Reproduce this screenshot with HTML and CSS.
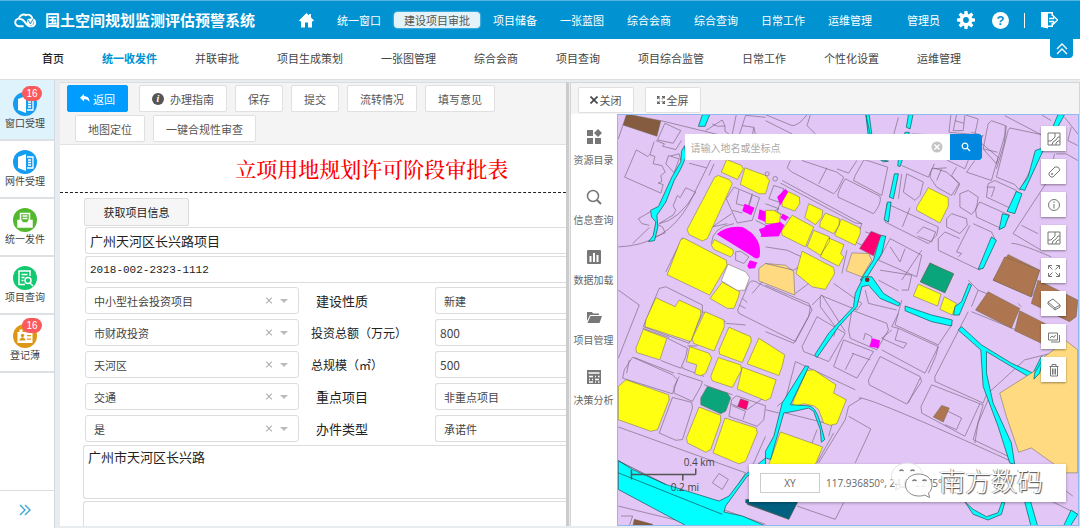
FILE: index.html
```html
<!DOCTYPE html>
<html lang="zh-CN">
<head>
<meta charset="utf-8">
<title>国土空间规划监测评估预警系统</title>
<link rel="stylesheet" href="styles.css">
</head>
<body>
<header class="topbar">
  <svg class="logo" viewBox="0 0 24 17" fill="none" stroke="#fff" stroke-width="2"><path d="M10 14.500H5.500a4 4 0 0 1-.5-8C6 3 9 1.500 12 2.500M5 7c3-1 5 1 7 4s4 4 7 3.500c4-1 4-6 .5-7C19 3 15 1 11.500 3.500"/><circle cx="17" cy="10" r="3.500" fill="#fff" stroke="none"/><path d="m15 8 2 4 3-5" stroke="#0092d1" stroke-width="1"/></svg>
  <h1 class="brand">国土空间规划监测评估预警系统</h1>
  <nav class="mainnav">
    <a href="#" class="home" aria-label="首页"><svg viewBox="0 0 15 15" fill="#fff"><path d="M7.500 0 0 7.500 1.300 8.500 2 8v6.500h4V9.500h3v5h4V8l.7.500L15 7.500 12 4.500V1h-2v1.500z"/></svg></a>
    <a href="#">统一窗口</a>
    <a href="#" class="active">建设项目审批</a>
    <a href="#">项目储备</a>
    <a href="#">一张蓝图</a>
    <a href="#">综合会商</a>
    <a href="#">综合查询</a>
    <a href="#">日常工作</a>
    <a href="#">运维管理</a>
  </nav>
  <div class="account">
    <span>管理员</span>
    <button aria-label="设置"><svg viewBox="0 0 18 18"><g fill="#fff"><circle cx="9" cy="9" r="6.200"/><path d="M7.500 0h3l.5 4H7zM7.500 18h3l.5-4H7zM0 7.500v3l4 .5V7zM18 7.500v3l-4 .5V7zM1.600 3.700l2.100-2.100 3.200 2.500-2.800 2.800zM14.300 1.600l2.100 2.100-2.500 3.200-2.800-2.800zM16.400 14.300l-2.100 2.100-3.200-2.500 2.800-2.800zM3.700 16.400l-2.100-2.100 2.500-3.200 2.800 2.800z"/></g><circle cx="9" cy="9" r="2.900" fill="#0092d1"/></svg></button>
    <button aria-label="帮助" class="help">?</button>
    <i class="bar"></i>
    <button aria-label="退出"><svg viewBox="0 0 18 18"><path d="M1 1h12v4h-1.500V2.500H8v12h3.500V12H13v4H8v1.500L1 16z" fill="#fff"/><path d="M9 7.500h4.500V5l4 4-4 4v-2.500H9" fill="none" stroke="#fff" stroke-width="1.300"/></svg></button>
  </div>
</header>
<nav class="subnav">
  <a href="#" class="first">首页</a><a href="#" class="on">统一收发件</a><a href="#">并联审批</a><a href="#">项目生成策划</a><a href="#">一张图管理</a><a href="#">综合会商</a><a href="#">项目查询</a><a href="#">项目综合监管</a><a href="#">日常工作</a><a href="#">个性化设置</a><a href="#">运维管理</a>
  <button class="collapse" aria-label="收起"><svg viewBox="0 0 12 12" fill="none" stroke="#fff" stroke-width="1.300"><path d="m1 6 5-5 5 5M1 11l5-5 5 5"/></svg></button>
</nav>
<div class="work">
  <aside class="side">
    <a href="#" class="item sel"><span class="ico blue"><svg viewBox="0 0 24 24"><path d="M5 7l8-3v17l-8-3z" fill="#fff"/><path d="M14 7h6v11h-6M15 10h3M15 12.500h3M15 15h3" fill="none" stroke="#fff" stroke-width="1.300"/></svg><b class="badge">16</b></span>窗口受理</a>
    <a href="#" class="item"><span class="ico blue"><svg viewBox="0 0 24 24"><path d="M5 7l8-3v17l-8-3z" fill="#fff"/><path d="M14 7h6v11h-6M15 10h3M15 12.500h3M15 15h3" fill="none" stroke="#fff" stroke-width="1.300"/></svg></span>网件受理</a>
    <a href="#" class="item"><span class="ico green"><svg viewBox="0 0 24 24" fill="none" stroke="#fff" stroke-width="1.500"><path d="M7.500 12V5.500h9V12M9.500 8h5M9.500 10.500h5"/><path d="M5 12.500h3l1.500 2.500h5l1.500-2.500h3V19H5z" fill="#fff"/></svg></span>统一发件</a>
    <a href="#" class="item"><span class="ico mint"><svg viewBox="0 0 24 24" fill="none" stroke="#fff" stroke-width="1.500"><path d="M17 10V5H6v13.500h6M8.500 8.500h6M8.500 11.500h3M8.500 14.500h2"/><circle cx="15" cy="14.500" r="3"/><path d="m17 17 3 3"/></svg></span>项目查询</a>
    <a href="#" class="item"><span class="ico gold"><svg viewBox="0 0 24 24"><path d="M4.500 8h2V5.500h3V8h5V5.500h3V8h2v11h-15z" fill="#fff"/><g fill="#dc9814"><circle cx="9.500" cy="11.500" r="1.700"/><path d="M6.500 16.500h6v-1l-2-2h-2l-2 2zM14 11h4v1.300h-4zM14 14.500h4v1.300h-4z"/></g></svg><b class="badge">16</b></span>登记薄</a>
    <button class="expand" aria-label="展开"><svg viewBox="0 0 12 12" fill="none" stroke="#36a3d9" stroke-width="1.300"><path d="m1 1 5 5-5 5M6 1l5 5-5 5"/></svg></button>
  </aside>

  <main class="formpane">
    <div class="tools">
      <div class="toolrow">
        <button class="btn primary"><svg viewBox="0 0 10 9" fill="#fff"><path d="M4 0v2.200c4 0 5.500 2 5.500 6C8.500 6 7 5 4 5.200V7.500L0 3.700z"/></svg>返回</button>
        <button class="btn guide"><i class="info">i</i>办理指南</button>
        <button class="btn">保存</button>
        <button class="btn">提交</button>
        <button class="btn">流转情况</button>
        <button class="btn">填写意见</button>
      </div>
      <div class="toolrow second">
        <button class="btn">地图定位</button>
        <button class="btn">一键合规性审查</button>
      </div>
    </div>
    <form class="form">
      <h2>立项用地规划许可阶段审批表</h2>
      <div class="fields">
        <button type="button" class="fetch">获取项目信息</button>
        <input class="box wide" aria-label="项目名称" value="广州天河区长兴路项目">
        <input class="box wide code" aria-label="项目编号" value="2018-002-2323-1112">
        <div class="grid">
          <div class="pick box"><select aria-label="项目类型"><option>中小型社会投资项目</option></select><button type="button" aria-label="清除"></button><i></i></div>
          <label for="f1">建设性质</label>
          <select id="f1" class="box half"><option>新建</option></select>
          <div class="pick box"><select aria-label="资金来源"><option>市财政投资</option></select><button type="button" aria-label="清除"></button><i></i></div>
          <label for="f2" class="wider">投资总额（万元）</label>
          <input id="f2" class="box num" value="800">
          <div class="pick box"><select aria-label="所在区"><option>天河区</option></select><button type="button" aria-label="清除"></button><i></i></div>
          <label for="f3" class="wider">总规模（㎡）</label>
          <input id="f3" class="box num" value="500">
          <div class="pick box"><select aria-label="行业"><option>交通</option></select><button type="button" aria-label="清除"></button><i></i></div>
          <label for="f4">重点项目</label>
          <select id="f4" class="box half"><option>非重点项目</option></select>
          <div class="pick box"><select aria-label="是否"><option>是</option></select><button type="button" aria-label="清除"></button><i></i></div>
          <label for="f5">办件类型</label>
          <select id="f5" class="box half"><option>承诺件</option></select>
        </div>
        <textarea class="box area" aria-label="地址">广州市天河区长兴路</textarea>
        <textarea class="box area" aria-label="备注"></textarea>
      </div>
    </form>
  </main>

  <section class="mappane">
    <div class="maptools">
      <button class="btn"><svg viewBox="0 0 8 8" stroke="#444" stroke-width="1.600"><path d="m.5.500 7 7m0-7-7 7"/></svg>关闭</button>
      <button class="btn"><svg viewBox="0 0 8 8" fill="none" stroke="#555" stroke-width="1.300"><path d="M.6 3V.6H3M5 .6h2.400V3M7.400 5v2.400H5M3 7.400H.6V5M1 1l2 2M7 1 5 3M7 7 5 5M1 7l2-2" stroke-dasharray="1.500 .6"/></svg>全屏</button>
    </div>
    <div class="mapbody">
      <nav class="layers">
        <a href="#"><svg viewBox="0 0 16 16" fill="#777"><path d="M1 1h6v6H1zM1 9h6v6H1zM9 9h6v6H9zM12 0l4 4-4 4-4-4z"/></svg>资源目录</a>
        <a href="#"><svg viewBox="0 0 16 16" fill="none" stroke="#777" stroke-width="1.500"><circle cx="7" cy="7" r="5.500"/><path d="m11 11 4 4" stroke-width="2"/></svg>信息查询</a>
        <a href="#"><svg viewBox="0 0 16 16"><rect x="1" y="1" width="14" height="14" rx="1" fill="#777"/><path d="M4.500 13V7M8 13V4M11.500 13V6" stroke="#fff" stroke-width="2"/></svg>数据加载</a>
        <a href="#"><svg viewBox="0 0 16 16" fill="#777"><path d="M1 12V3h5l1 1.500h6V6H4zM4.500 7H16l-2.500 7H1.500z"/></svg>项目管理</a>
        <a href="#"><svg viewBox="0 0 16 16"><rect x="1" y="1" width="14" height="14" fill="#777"/><path d="M2.500 4h11M3 7.500h4M3 10.500h1M6 10.500h1M3 13h4M9 7.500h1M12 7.500h1.500M9 10.500h4M9 13h1M12 13h1.500" stroke="#fff" stroke-width="1.300"/></svg>决策分析</a>
      </nav>
      <div class="map">
        <svg class="canvas" viewBox="617 114 462 412" preserveAspectRatio="xMidYMid slice">
          <rect class="land" x="0" y="0" width="2000" height="1200"/>
          <g transform="translate(565 80) scale(.33333)">
            <path class="brown dark" d="M182 100 285 120 273 167 171 133z"/>
            <path class="lot" d="M171 133 157 175M285 120 470 165M297 128 345 150 322 188 275 178zM270 180 296 190 290 197 330 207 347 180M252 222 265 183M211 208 176 290 285 338 292 312 277 308 288 303 285 285 298 275 288 255 262 250 267 228 252 222 246 228zM300 250 308 225 340 235 325 277zM315 226 340 220 345 240M420 150 470 118 478 136 455 137 440 130M478 136 478 152 490 160M500 160 512 102M522 160 540 104 600 110M530 135 565 140 560 165M565 140 570 165M157 500Q300 495 370 370L435 238M370 248 422 262M384 333 360 322 343 352 335 345 322 376 330 390 322 404 280 430Q340 420 390 335zM270 385 217 415 228 430 250 435M250 442 200 490M270 430 290 440 298 458 265 470M350 472 300 575M440 440 485 430M498 400 440 440M482 355 505 320 582 352 560 420 515 428 482 355M520 328 512 370 550 380 560 345M500 390 530 398M505 430Q440 440 437 490M510 515 525 513 550 530 535 550 510 540zM560 340 548 378M570 420 600 435M430 285 445 250"/>
            <path class="river" d="M410 102 432 102 418 137 398 137zM357 195 347 212 345 244 318 290 278 378 254 390 257 410 270 425 262 466 248 484 266 481 276 440 273 405 300 365 325 300 345 265 360 230z"/>
            <path class="yellow" d="M447 290 458 285 492 298 500 310 425 475 410 482 370 463 364 448zM483 237 528 255 533 265 515 297 467 275zM538 262 600 285 612 300 600 340 580 340 524 312zM345 478 355 474 482 540 484 555 432 645 304 584zM446 478 502 508 503 520 495 530 445 508 437 495zM470 606 522 635 518 652 505 685 485 685 433 655z"/>
            <path class="pink" d="M453 462Q480 435 530 440 Q592 470 582 530 Q575 540 560 528zM537 370 567 382 557 405 530 392zM553 540 575 547 568 564 550 566 545 557zM582 387 605 395 598 424 577 415zM580 447 600 440 603 470 588 465z"/>
            <path class="white" d="M487 552 540 575 552 592 538 630 515 631 467 602z"/>
            <path class="sand" d="M580 565 600 550 660 555 685 575 688 645 600 610 580 603z"/>
            <path class="lot" d="M545 620Q555 590 580 610L735 680 730 710 690 785 520 700Q512 690 520 680zM590 605 560 640M530 655 545 667M520 675 540 685"/>
          </g>
          <g transform="translate(765 80) scale(.33333)">
            <path class="lot" d="M0 102 80 135Q100 135 125 102M0 120 80 160M135 102 125 135 150 160M75 240 65 262 80 275 205 340Q215 335 235 290L215 275 110 240M185 262 160 310M275 240 250 278 215 265M295 240 270 285 265 300 350 345 368 260 300 238zM240 295 345 348Q350 370 325 400L218 350Q215 335 240 295zM50 300 290 430 270 490M45 308 270 428 290 430M10 355 25 315 55 325 40 365zM0 370 40 385 20 395M45 362 35 395 75 415M400 110 385 165M410 255 490 290 508 250M440 160 560 165M558 102 552 155 630 162 640 115 600 102M575 102 565 150 595 150 600 104M570 120 597 128M680 120 722 135 720 165 695 250 655 205 670 130zM725 135 718 190 695 265M620 155 655 165 610 240M655 205 698 215M735 142 845 165 845 180 765 330 750 312 695 290 730 150zM640 180 700 230 680 300 605 275 630 240M545 262 500 265 495 290 515 320 560 345 582 310 560 285 575 260M530 265 515 300M505 262 545 275 585 310 568 345M425 280 475 305 465 345 450 360 415 335zM410 280 400 355M365 370 520 440 515 465 490 490 360 425zM435 382 412 440M455 460 475 440 512 455 500 485 458 468M545 238 600 265 610 240M585 340 610 330 640 350 635 385 620 402 585 380zM690 300 755 330 740 385 665 350 670 310zM665 320 690 320 680 350M645 365 735 405 710 445 635 410 632 385zM560 400 605 415 607 435 585 460 545 440 545 415zM625 430 680 455 690 475 645 570 520 510 520 475 540 455 585 475M615 435 575 515 590 520 580 530M740 490Q755 485 860 530M870 220 850 300 745 460 830 510M770 435 820 460M900 110 940 160M720 105 835 165M830 102 860 120M875 220 905 220 940 240M920 140 910 180 940 195M375 475 470 525 455 590 340 540zM420 505 405 545 375 500M470 510 410 600M0 500 65 510 130 540 85 570 0 550M330 515 260 480M355 470 300 455M245 510 230 580"/>
            <path class="river" d="M302 102 315 162 308 162M302 102 312 102 320 162 309 162zM430 102 444 102 435 145 424 140zM420 155 433 155 430 163 418 162zM400 237 412 237 405 258 398 256zM345 237 370 242 355 244zM388 280 400 280 385 355 373 350zM367 365 378 365 370 425 357 418zM880 102 900 102 880 138 865 138zM812 210 840 200 780 330 765 325 790 290zM755 333 772 340 750 400 727 393zM713 400 733 405 720 440 703 448zM680 470 695 480 655 565 640 567zM345 465 362 468 350 520 300 600 285 600 325 540z"/>
            <path class="yellow" d="M490 322 550 352 550 378 525 428 455 390 455 380zM65 332 102 350 103 370 88 392 50 378 50 362zM130 370 172 390 170 410 150 433 118 412zM180 398 222 415 222 435 205 460 163 440 165 425zM228 416 285 443 285 460 270 495 208 465zM80 405 145 440 120 500 50 465 48 452zM145 450 193 470 192 485 165 525 125 500zM190 473 236 493 226 520 236 530 220 558 165 530zM110 513 205 562 208 580 180 628 140 620 92 580zM0 390 25 390 45 402 42 430 0 430z"/>
            <path class="pink" d="M60 325 68 335 45 375 35 350zM52 400 70 410 60 422 45 412zM0 435 45 425 57 435 40 468 -15 470z"/>
            <path class="rose" d="M318 453 348 465 325 527 283 505z"/>
            <path class="sand" d="M260 518 310 520 320 540 290 590 243 572z"/>
            <path class="teal" d="M495 548 566 582 540 638 466 605z"/>
            <path class="brown" d="M730 523 825 570 800 650 685 600z"/>
            <circle class="lot" cx="29" cy="295" r="7"/><circle class="lot" cx="5" cy="280" r="6"/>
          </g>
          <g transform="translate(565 270) scale(.33333)">
            <path class="lot" d="M157 60 220 105 157 265M300 50 410 105 410 130 370 220 232 170 280 55zM305 205 365 235 360 260 345 295 285 272M230 175 310 203M205 263 325 310M335 310 410 335 405 350 380 395 325 370 325 350 340 320M365 228 395 228M352 290 350 295 415 320M200 262 320 315 335 330 320 372 170 325 175 300zM190 270 182 310M320 383 378 398 380 415 350 510 330 512 280 490zM157 472 540 610 470 720 600 765M157 710 420 774M545 420 600 380M512 378 600 408 595 450 575 470 490 440 498 390zM495 402 520 412M500 408 540 425 532 450M460 612 488 630 470 660 440 640zM165 740 200 740 190 770M410 125 480 155M480 160 540 165M560 590 600 500M415 345 500 375"/>
            <path class="river" d="M157 573 200 600 300 645 460 695 490 680 540 615 600 565 600 595 545 620 480 710 475 728 530 740 600 770 370 774 157 660z"/>
            <path class="ink" d="M157 610 470 735M157 574 300 645"/>
            <path class="yellow" d="M270 83 328 110 340 90 405 120 405 135 375 215 237 170 240 150zM418 125 475 150 476 170 445 243 383 220 380 205zM490 172 555 200 557 215 530 278 462 253 460 240zM580 205 658 255 650 290 640 317 545 282zM232 178 303 205 282 270 212 248 210 235zM372 230 430 250 438 265 420 310 405 318 387 312 393 285 362 275zM458 263 525 285 528 300 500 353 440 333 435 320zM530 292 632 330 615 385 600 393 515 358zM180 330 308 375 310 390 275 480 255 485 157 450 157 350zM400 412 465 437 465 455 435 540 420 548 365 520 362 505zM478 445 572 475 575 490 540 575 520 583 442 550z"/>
            <path class="teal" d="M425 350 485 370 495 385 480 425 465 432 405 405 405 385z"/>
            <path class="rose" d="M525 387 549 395 542 420 516 410z"/>
            <path class="brown dark" d="M205 750 260 765 260 774 200 774z"/>
            <path class="blue" d="M545 690 700 690 670 750 545 705z"/>
          </g>
          <g transform="translate(765 270) scale(.33333)">
            <path class="lot" d="M0 45 130 100 140 120 85 220 0 185M90 70 130 40M140 105 170 75 240 185M165 75 275 120 290 100 205 40M165 80 165 110 210 170M260 120 365 160 370 180 335 240 255 205 250 180zM400 130 380 170 400 175 390 210 425 220 415 235 350 205 380 180M400 175 520 230 480 310 350 240M520 230 512 260 490 310M295 210 300 190 320 200 318 220M235 210 325 245 275 325 205 290zM260 250 315 270M265 250 240 300M345 260 465 320 470 335 425 403 312 345 310 330zM465 325 430 400M155 140 240 190 190 275 115 245 110 230zM205 200 210 185M300 60 310 100 395 120M345 0 440 15 430 60 410 60M340 30 400 62M410 90 390 165 520 225 560 165M610 125 510 320M620 125 780 190M510 320 510 335 655 400 665 375 780 270 860 250M500 345 645 402 600 500 470 430 468 410zM550 425 590 445 575 480 540 465M280 385Q300 375 750 580M290 385 250 410 240 450 160 580M250 440 317 478 270 580M645 402 655 405 625 510 740 565M670 390 640 460 630 520M90 275 60 390 35 410M90 275 270 360M60 430 200 465 190 500M40 430 0 420M205 490 155 580M155 480 140 520M800 80 830 30M760 100 770 110M640 60 700 85M610 30 640 60 620 110M95 710 210 750 235 700M860 695 940 735M905 665 925 680"/>
            <path class="yellow" d="M145 300 212 345 205 370 243 390 215 462 195 467 175 460 160 420 145 408 115 402 80 412 85 390 125 302zM45 487 172 532 150 585 10 585zM460 42 528 72 518 108 445 78zM538 80 575 100 562 135 525 118z"/>
            <path class="river" d="M295 20 320 20 355 70 405 100 400 108 345 85 310 45 290 50 275 110 220 170 155 263 148 255 190 190 265 110 270 70zM420 108 500 135 562 150 560 168 500 155 420 122zM612 40 620 45 600 95 583 135 566 135 570 110 590 95zM590 170 650 225 740 280 805 310 830 260 840 265 835 290 805 328 740 290 665 245 665 310 685 400 740 520 750 585 735 580 700 470 655 350 648 240 580 180zM120 288 130 290 75 405 125 408Q150 405 165 460L178 510 168 518 165 480 145 425 130 415 85 425 55 430 15 570 0 565 0 545 25 500 50 400zM600 697 625 720 665 742 700 730 712 697 720 700 710 735 670 752 625 735zM780 697 798 697 820 774 800 774zM920 722 940 735 915 774 895 774z"/>
            <path class="pink" d="M322 205 345 212 340 235 312 230z"/>
            <path class="teal" d="M495 -20 566 10 540 68 466 35z"/>
            <path class="brown" d="M720 -40 825 0 798 80 685 30zM670 65 765 115 740 175 632 120zM765 122 850 165 830 220 750 182zM820 30 940 90 935 140 915 155 800 100zM530 407 553 415 535 457 505 442z"/>
            <path class="sand" d="M905 213 940 240 940 610 905 610 800 535 762 548 725 440 705 370 840 285 840 260z"/>
            <path class="blue" d="M-60 690 97 697 70 750-60 700z"/>
            <path class="river" d="M810 310 838 262 825 310 808 328z"/>
            <circle cx="306" cy="29" r="7" fill="#8b2020"/>
          </g>
          <g class="scale"><path d="M630.500 470v10M630.500 475H695M695 469v6M682 475v6" fill="none" stroke="#555" stroke-width="1.500"/><text x="683" y="466">0.4 km</text><text x="670" y="492">0.2 mi</text></g>
        </svg>
        <form class="search"><input aria-label="搜索" placeholder="请输入地名或坐标点"><button type="button" class="clear" aria-label="清空"><svg viewBox="0 0 12 12"><circle cx="6" cy="6" r="5.500" fill="#c4c4c4"/><path d="m3.500 3.500 5 5m0-5-5 5" stroke="#fff" stroke-width="1.500"/></svg></button><button type="button" class="go" aria-label="查询"><svg viewBox="0 0 10 10" fill="none" stroke="#fff" stroke-width="1.200"><circle cx="4" cy="4" r="2.800"/><path d="m6 6 3 3"/></svg></button></form>
        <div class="mapbtns">
          <button aria-label="底图"><svg viewBox="0 0 14 14"><path d="M1 1h12v12H1zM1 9h3l4-4V1M5 13l1-3 3-2 2-3h2M9 13v-2l2-2h2"/></svg></button>
          <button aria-label="标签"><svg viewBox="0 0 14 14"><path d="m2 8 6-6h3l2 3-7 7H4L2 10z"/><circle cx="5" cy="9" r=".6"/></svg></button>
          <button aria-label="信息"><svg viewBox="0 0 14 14"><circle cx="7" cy="7" r="5.500"/><path d="M7 6v4.500M7 3.500V5"/></svg></button>
          <button aria-label="图层"><svg viewBox="0 0 14 14"><path d="M1 1h12v12H1zM1 9h3l4-4V1M5 13l1-3 3-2 2-3h2M9 13v-2l2-2h2"/></svg></button>
          <button aria-label="全图"><svg viewBox="0 0 14 14"><path d="M1.500 5V1.500H5M9 1.500h3.500V5M12.500 9v3.500H9M5 12.500H1.500V9M2 2l3.500 3.500M12 2 8.500 5.500M12 12 8.500 8.500M2 12l3.500-3.500"/></svg></button>
          <button aria-label="擦除"><svg viewBox="0 0 14 14"><path d="M1 5 6 2l7 6-5 3zM1 5v2l7 6 5-3V8M8 11v2"/></svg></button>
          <button aria-label="图片"><svg viewBox="0 0 14 14"><path d="M1.500 3h9v7h-9zM12.500 5v7H4M3 8l2-2 2 1.500L8.500 5"/></svg></button>
          <button aria-label="删除"><svg viewBox="0 0 14 14"><path d="M2.500 3.500h9M5 3V1.500h4V3M3.500 4v9h7V4M5.500 5.500v6M7 5.500v6M8.500 5.500v6"/></svg></button>
        </div>
        <div class="coords"><span class="xy">XY</span><output>117.936850°, 24.612275°</output></div>
        <div class="mark"><svg viewBox="0 0 42 36"><path d="M17 1C8 1 1 6.500 1 14c0 4 2 7 5.500 9L5 28l6-3c10 2 20-1 21-11C32 6.500 26 1 17 1z" fill="#fffc" stroke="#ddd" stroke-width=".8"/><path d="M28 12c-7 0-13 4.500-13 11s6 11 13 11c2 0 4 0 6-1l5 2.500-1-4.500c2.500-2 3.500-5 3.500-8 0-6.500-6-11-13.500-11z" fill="#fffd" stroke="#888"/><g fill="none" stroke="#777" stroke-width="1.300"><path d="M9 9q2-2 4 0M20 9q2-2 4 0M22 19q2-2 4 0M32 19q2-2 4 0"/></g></svg><span>南方数码</span></div>
      </div>
    </div>
  </section>
</div>
</body>
</html>
```
FILE: styles.css
```css
* { box-sizing: border-box; }
body {
  margin: 0;
  height: 100vh;
  display: flex;
  flex-direction: column;
  overflow: hidden;
  background: #e9ecef;
  color: #444;
  font: 11px/16px "Noto Sans CJK SC", "Liberation Sans", sans-serif;
}
a { color: inherit; text-decoration: none; white-space: nowrap; }
button, input, select, textarea { font: inherit; color: inherit; margin: 0; }
button { padding: 0; border: 0; background: none; white-space: nowrap; }
svg { display: block; flex: none; }

.topbar {
  flex: none;
  display: flex;
  align-items: center;
  height: 39px;
  padding: 0 22px 0 14px;
  border-top: 1px solid #55b6e0;
  background: #0092d1;
  color: #fff;
}
.logo { width: 23px; height: 17px; }
.brand { margin: 0 0 0 8px; font-size: 15px; line-height: 24px; white-space: nowrap; }
.mainnav { display: flex; align-items: center; gap: 23px; margin-left: 44px; }
.home svg { width: 15px; height: 15px; }
.mainnav .active {
  margin: 0 -10px;
  padding: 0 10px;
  border-radius: 4px;
  background: #e4f3fa;
  color: #555;
  box-shadow: 0 0 2px #e4f3fa;
}
.account { display: flex; align-items: center; gap: 17px; margin-left: auto; }
.account svg { width: 18px; height: 18px; }
.help {
  width: 17px;
  height: 17px;
  border-radius: 50%;
  background: #fff;
  color: #0092d1;
  font: bold 13px/17px "Liberation Sans", sans-serif;
}
.bar { width: 1px; height: 15px; background: #fff; margin: 0 -2px; }

.subnav {
  flex: none;
  position: relative;
  display: flex;
  align-items: center;
  gap: 38px;
  height: 41px;
  padding: 0 0 2px 42px;
  border-bottom: 1px solid #ddd;
  background: #fff;
}
.first { font-weight: 500; color: #222; }
.on { font-weight: bold; color: #0092d1; }
.collapse {
  position: absolute;
  top: 0;
  right: 7px;
  display: grid;
  place-items: center;
  width: 23px;
  height: 19px;
  border-radius: 0 0 4px 4px;
  background: #0092d1;
}
.collapse svg { width: 12px; height: 12px; }

.work { flex: 1; display: flex; min-height: 0; }
.side {
  flex: none;
  display: flex;
  flex-direction: column;
  width: 55px;
  border-right: 1px solid #d3dbe2;
  background: #fff;
}
.item {
  display: flex;
  flex-direction: column;
  align-items: center;
  height: 58px;
  padding: 9px 4px 0 0;
  border-bottom: 2px solid #dde1e4;
  font-size: 10px;
  line-height: 14px;
}
.sel { height: 61px; padding-top: 12px; background: #dff3fd; }
.ico { position: relative; width: 24px; height: 24px; border-radius: 50%; }
.blue { background: #149cf0; }
.green { background: #53b82e; }
.mint { background: #12c870; }
.gold { background: #dc9814; }
.badge {
  position: absolute;
  top: -6px;
  right: -5px;
  width: 20px;
  border-radius: 8px;
  background: #fb5a5c;
  color: #fff;
  font: 10px/15px "Liberation Sans", sans-serif;
  text-align: center;
}
.expand {
  display: grid;
  place-items: center;
  height: 38px;
  margin-top: auto;
  padding-right: 4px;
  border-top: 1px solid #d8dde1;
}
.expand svg { width: 12px; height: 12px; }

.formpane {
  flex: 508;
  display: flex;
  flex-direction: column;
  min-width: 0;
  margin: 2px 1px 2px 5px;
  border-right: 3px solid #ccc;
  background: #fff;
}
.tools {
  flex: none;
  display: flex;
  flex-direction: column;
  gap: 3px;
  padding: 2px 7px;
  border-top: 1px solid #ddd;
  border-bottom: 1px solid #e2e2e2;
  background: #f4f4f4;
}
.toolrow { display: flex; gap: 8px; }
.second { padding-left: 8px; }
.btn {
  display: flex;
  align-items: center;
  justify-content: center;
  gap: 6px;
  height: 27px;
  padding: 0 12px;
  border: 1px solid #e0e0e0;
  border-radius: 2px;
  background: #fff;
  color: #555;
}
.primary { gap: 3px; margin-right: 3px; border-color: #009cff; background: #009cff; color: #fff; }
.primary svg { width: 10px; height: 9px; }
.info {
  width: 12px;
  height: 12px;
  border-radius: 50%;
  background: #555;
  color: #fff;
  font: italic bold 10px/12px "Liberation Serif", serif;
}

.form { flex: 1; min-height: 0; overflow: hidden; }
.form h2 {
  margin: 0;
  padding: 7px 0 8px 118px;
  height: 48px;
  border-bottom: 1px dashed #222;
  color: #f00;
  text-align: center;
  font: 500 21px/32px "Noto Serif CJK SC", "Noto Sans CJK SC", serif;
}
.fields { display: flex; flex-direction: column; padding: 5px 0 0 24px; }
.fetch {
  align-self: flex-start;
  width: 105px;
  height: 28px;
  border: 1px solid #ddd;
  border-radius: 2px;
  background: #f6f6f6;
  color: #222;
}
.box {
  height: 27px;
  min-width: 0;
  border: 1px solid #ddd;
  border-radius: 3px 0 0 3px;
  background: #fff;
  padding: 0 4px;
  outline: 0;
}
.wide { margin: 1px 0 1px 1px; border-right: 0; font-size: 13px; color: #222; }
.code { font: 11px/16px "Liberation Mono", monospace; }
.grid {
  display: grid;
  grid-template-columns: 214px 136px 1fr;
  gap: 5px 0;
  align-items: center;
  margin: 3px 0 3px 1px;
}
.pick { display: flex; align-items: center; padding: 0 10px 0 8px; border-radius: 3px; }
.pick select { flex: 1; min-width: 0; padding: 0; border: 0; background: none; appearance: none; }
.pick button { position: relative; width: 8px; height: 8px; margin-right: 7px; }
.pick button::before, .pick button::after {
  content: "";
  position: absolute;
  top: 3px;
  left: 0;
  width: 8px;
  height: 1px;
  background: #aaa;
  transform: rotate(45deg);
}
.pick button::after { transform: rotate(-45deg); }
.pick i { border: 4px solid transparent; border-top-color: #bbb; border-bottom: 0; }
.grid label { padding-left: 17px; font-size: 13px; line-height: 20px; color: #222; white-space: nowrap; }
.grid .wider { padding-left: 12px; font-size: 12px; }
.half { appearance: none; padding: 0 8px; border-right: 0; }
.num { border-right: 0; font-size: 12px; }
.area {
  height: 54px;
  margin: 0 0 2px -1px;
  padding: 1px 4px;
  border-right: 0;
  resize: none;
  overflow: hidden;
  color: #222;
  font-size: 13px;
  line-height: 20px;
}

.mappane {
  flex: 511;
  display: flex;
  flex-direction: column;
  min-width: 0;
  margin: 2px 0 2px 0;
  border: 1px solid #d5d5d5;
  border-bottom: 0;
  background: #f4f4f4;
}
.maptools { flex: none; display: flex; gap: 11px; padding: 4px 7px 1px; }
.maptools .btn { height: 26px; padding: 0 11px; gap: 2px; }
.maptools .btn svg { width: 8px; height: 8px; }
.mapbody { flex: 1; display: flex; min-height: 0; }
.layers {
  flex: none;
  display: flex;
  flex-direction: column;
  gap: 22px;
  width: 46px;
  padding-top: 15px;
  background: #fff;
  color: #666;
  font-size: 10px;
  line-height: 14px;
}
.layers a { display: flex; flex-direction: column; align-items: center; gap: 8px; }
.layers svg { width: 16px; height: 16px; }
.map { flex: 1; position: relative; min-width: 0; border: 1px solid #8fb8ef; overflow: hidden; }
.canvas { position: absolute; inset: 0; width: 100%; height: 100%; }
.land { fill: #e2c6f5; }
.lot { fill: none; stroke: #77697f; stroke-width: 2; stroke-linejoin: round; }
.yellow, .sand, .teal, .brown, .rose, .white, .canvas .blue { stroke: #6b6455; stroke-width: 1.5; stroke-linejoin: round; }
.yellow { fill: #ff1; }
.pink { fill: #f0f; }
.rose { fill: #ff0074; }
.teal { fill: #0aa57b; }
.brown { fill: #ae7650; }
.dark { fill: #855c40; }
.sand { fill: #ffda80; }
.white { fill: #fff; }
.canvas .blue { fill: #006080; }
.river { fill: #0ff; stroke: #174a50; stroke-width: 2; }
.ink { fill: none; stroke: #174a50; stroke-width: 2; }
.scale text { fill: #444; font: 10px "Open Sans", sans-serif; }

.search {
  position: absolute;
  top: 19px;
  left: 67px;
  right: 96px;
  display: flex;
  align-items: center;
  height: 26px;
  background: #fff;
}
.search input { flex: 1; min-width: 0; height: 24px; padding: 0 6px; border: 0; outline: 0; background: none; font-size: 10px; }
.search input::placeholder { color: #aaa; }
.clear { margin-right: 7px; }
.clear svg { width: 12px; height: 12px; }
.go { display: grid; place-items: center; width: 32px; height: 26px; border-radius: 0 3px 3px 0; background: #0088e0; }
.go svg { width: 10px; height: 10px; }
.mapbtns { position: absolute; top: 11px; right: 12px; display: grid; gap: 8px; }
.mapbtns button { display: grid; place-items: center; width: 25px; height: 25px; background: #fff; box-shadow: 0 1px 2px #0006; }
.mapbtns svg { width: 14px; height: 14px; fill: none; stroke: #777; stroke-width: 1; }
.coords {
  position: absolute;
  right: 12px;
  bottom: 23px;
  display: flex;
  align-items: center;
  gap: 6px;
  width: 317px;
  height: 38px;
  padding-left: 11px;
  background: #fff;
  box-shadow: 0 1px 3px #0005;
  color: #666;
  font: 10px/16px "Open Sans", sans-serif;
}
.xy { width: 60px; border: 1px solid #ccc; line-height: 18px; text-align: center; }
.mark {
  position: absolute;
  right: 35px;
  bottom: 27px;
  display: flex;
  align-items: center;
  gap: 6px;
  color: #fff;
  font-size: 26px;
  font-weight: 300;
  line-height: 36px;
  text-shadow: 1px 1px 1px #444, -1px 0 0 #aaa;
}
.mark svg { width: 43px; height: 36px; }
```
